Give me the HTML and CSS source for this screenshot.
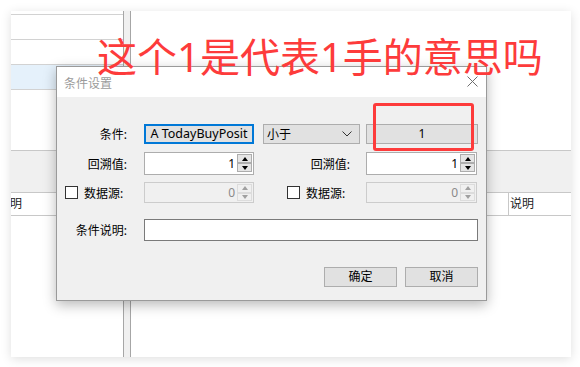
FILE: index.html
```html
<!DOCTYPE html>
<html lang="zh-CN">
<head>
    <meta charset="UTF-8">
    <title>条件设置</title>
    <link rel="stylesheet" href="styles.css">
</head>
<body>
    <div class="screen">
      <div class="panes">
        <div class="pane left-pane">
          <div class="top">
            <ul class="list">
              <li></li>
              <li></li>
              <li class="selected"></li>
            </ul>
          </div>
          <div class="band"></div>
          <div class="head"><span class="clip">说明</span></div>
        </div>
        <div class="splitter"></div>
        <div class="pane right-pane">
          <div class="top"></div>
          <div class="band"></div>
          <div class="head">
            <div class="cell first"></div>
            <div class="cell">说明</div>
          </div>
        </div>
      </div>

      <!-- dialog window on top of the app -->
      <div class="dialog">
        <div class="title-bar">
          <span class="title">条件设置</span>
          <svg class="close" width="11" height="11" viewBox="0 0 11 11">
            <path d="M0.5 0.5 L10.5 10.5 M10.5 0.5 L0.5 10.5" stroke="#6e6e6e" stroke-width="1" fill="none"/>
          </svg>
        </div>
        <div class="dialog-body">
          <div class="row row1">
            <label class="lbl">条件:</label>
            <div class="btn focus">A TodayBuyPosit</div>
            <div class="combo">
              <span>小于</span>
              <svg width="10" height="6" viewBox="0 0 10 6"><path d="M0.5 0.5 L5 5 L9.5 0.5" stroke="#333" fill="none"/></svg>
            </div>
            <div class="btn value">1</div>
          </div>

          <div class="row row2">
            <label class="lbl">回溯值:</label>
            <div class="spin">
              <span class="val">1</span>
              <div class="arrows">
                <span class="arr up"></span>
                <span class="arr down"></span>
              </div>
            </div>
            <label class="lbl right">回溯值:</label>
            <div class="spin wide">
              <span class="val">1</span>
              <div class="arrows">
                <span class="arr up"></span>
                <span class="arr down"></span>
              </div>
            </div>
          </div>

          <div class="row row3">
            <div class="check"><span class="box"></span><span>数据源:</span></div>
            <div class="spin disabled">
              <span class="val">0</span>
              <div class="arrows">
                <span class="arr up"></span>
                <span class="arr down"></span>
              </div>
            </div>
            <div class="check right"><span class="box"></span><span>数据源:</span></div>
            <div class="spin disabled wide">
              <span class="val">0</span>
              <div class="arrows">
                <span class="arr up"></span>
                <span class="arr down"></span>
              </div>
            </div>
          </div>

          <div class="row row4">
            <label class="lbl">条件说明:</label>
            <div class="text-input"></div>
          </div>

          <div class="actions">
            <div class="btn action">确定</div>
            <div class="btn action">取消</div>
          </div>
        </div>
      </div>

      <div class="note">这个1是代表1手的意思吗</div>
      <div class="mark"></div>
    </div>
</body>
</html>
```

FILE: styles.css
```css
body {
    margin: 0;
    background-color: #fff;
    font-family: "Noto Sans", "Noto Sans CJK SC", sans-serif;
    font-size: 12px;
    color: #000;
}
.screen {
    position: relative;
    width: 560px;
    height: 346px;
    margin: 11px;
    background-color: #fff;
    box-shadow: 0 2px 10px rgba(0, 0, 0, 0.13);
    overflow: hidden;
}
.panes {
    display: flex;
    height: 100%;
}
.pane {
    display: flex;
    flex-direction: column;
    overflow: hidden;
}
.left-pane {
    width: 112px;
}
.right-pane {
    flex: 1;
}
.splitter {
    width: 8px;
    box-sizing: border-box;
    border-left: 1px solid #a6a6a6;
    border-right: 1px solid #a6a6a6;
    background-color: #f0f0f0;
}
.top {
    height: 139px;
}
.list {
    list-style: none;
    margin: 3px 0 0;
    padding: 0;
    border-top: 1px solid #d2d2d2;
}
.list li {
    height: 24px;
    border-bottom: 1px solid #d2d2d2;
}
.list li.selected {
    background-color: #e5f1fb;
}
.band {
    height: 41px;
    border-top: 1px solid #c8c8c8;
    background-color: #f0f0f0;
}
.head {
    display: flex;
    height: 22px;
    border-top: 1px solid #c8c8c8;
    border-bottom: 1px solid #c8c8c8;
    line-height: 22px;
    color: #222;
    white-space: nowrap;
}
.clip {
    margin-left: -13px;
}
.head .cell.first {
    width: 376px;
    border-right: 1px solid #c8c8c8;
}
.head .cell {
    padding-left: 1px;
}

/* dialog */
.dialog {
    position: absolute;
    left: 45px;
    top: 55px;
    width: 431px;
    height: 235px;
    box-sizing: border-box;
    border: 1px solid #9a9a9a;
    background-color: #f0f0f0;
    box-shadow: 0 4px 12px rgba(0, 0, 0, 0.28);
    display: flex;
    flex-direction: column;
}
.title-bar {
    height: 30px;
    background-color: #fff;
    display: flex;
    align-items: center;
    justify-content: space-between;
    padding: 0 8px 0 7px;
}
.title {
    color: #9b9b9b;
    margin-top: 1px;
}
.close {
    margin-top: -2px;
}
.dialog-body {
    padding-top: 27px;
}
.row {
    display: grid;
    grid-template-columns: 87px 119px 103px 112px;
    align-items: center;
}
.row1 { height: 20px; margin-bottom: 8px; }
.row2 { height: 23px; margin-bottom: 7px; }
.row3 { height: 21px; margin-bottom: 16px; }
.row4 { height: 22px; }

.lbl {
    text-align: right;
    padding-right: 17px;
    white-space: nowrap;
}
.lbl.right {
    padding-right: 16px;
}
.btn {
    box-sizing: border-box;
    height: 20px;
    border: 1px solid #adadad;
    background-color: #e1e1e1;
    text-align: center;
    line-height: 18px;
    white-space: nowrap;
    overflow: hidden;
}
.btn.focus {
    width: 110px;
    border: 2px solid #0078d7;
    line-height: 16px;
    font-size: 12.5px;
}
.btn.value {
    width: 112px;
}
.combo {
    box-sizing: border-box;
    width: 97px;
    height: 20px;
    border: 1px solid #adadad;
    background-color: #e1e1e1;
    display: flex;
    align-items: center;
    justify-content: space-between;
    padding: 0 7px 0 3px;
}
.spin {
    box-sizing: border-box;
    width: 110px;
    height: 23px;
    border: 1px solid #adadad;
    background-color: #fff;
    display: flex;
    align-items: center;
}
.spin.wide {
    width: 111px;
}
.spin .val {
    flex: 1;
    text-align: right;
    padding-right: 2px;
}
.arrows {
    width: 15px;
    height: 18px;
    margin: 1px 1px 0 0;
    display: flex;
    flex-direction: column;
    align-self: flex-start;
}
.arr {
    flex: 1;
    box-sizing: border-box;
    border: 1px solid #adadad;
    background-color: #e5e5e5;
    display: flex;
    align-items: center;
    justify-content: center;
}
.arr::after {
    content: "";
    border-left: 3px solid transparent;
    border-right: 3px solid transparent;
}
.arr.up::after {
    border-bottom: 4px solid #000;
}
.arr.down::after {
    border-top: 4px solid #000;
}
.spin.disabled {
    height: 21px;
    border-color: #cccccc;
    background-color: #f0f0f0;
}
.spin.disabled .val {
    color: #8a8a8a;
}
.spin.disabled .arrows {
    height: 17px;
}
.spin.disabled .arr {
    border-color: #dcdcdc;
    background-color: #f0f0f0;
}
.spin.disabled .arr.up::after {
    border-bottom-color: #a0a0a0;
}
.spin.disabled .arr.down::after {
    border-top-color: #a0a0a0;
}
.check {
    display: flex;
    align-items: center;
    gap: 6px;
    padding-left: 8px;
    white-space: nowrap;
}
.check.right {
    padding-left: 24px;
}
.box {
    width: 13px;
    height: 13px;
    box-sizing: border-box;
    border: 1px solid #333;
    background-color: #fff;
}
.text-input {
    grid-column: 2 / 5;
    height: 22px;
    box-sizing: border-box;
    border: 1px solid #7a7a7a;
    background-color: #fff;
}
.actions {
    width: 421px;
    margin-top: 26px;
    display: flex;
    justify-content: flex-end;
    gap: 8px;
}
.btn.action {
    width: 73px;
}

/* red annotation over the screenshot */
.note {
    position: absolute;
    left: 86px;
    top: 26px;
    font-family: "Noto Sans", "Noto Sans CJK SC", sans-serif;
    font-size: 40px;
    line-height: 40px;
    color: #fd3b3b;
    white-space: nowrap;
}
.mark {
    position: absolute;
    left: 362px;
    top: 92px;
    width: 101px;
    height: 48px;
    box-sizing: border-box;
    border: 3px solid #fd3b3b;
    border-radius: 3px;
}
```
